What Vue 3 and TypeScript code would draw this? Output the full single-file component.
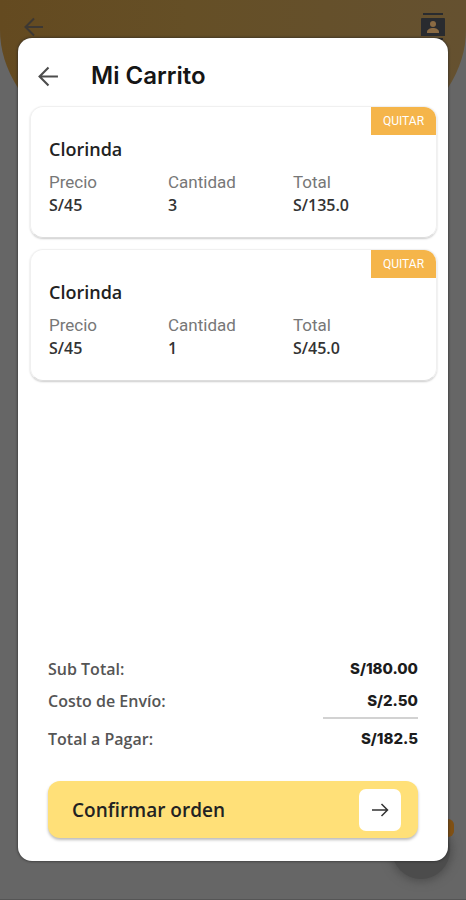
<script setup lang="ts">
import { computed, ref } from 'vue'

interface CartItem {
  id: number
  name: string
  price: number
  quantity: number
}

const items = ref<CartItem[]>([
  { id: 1, name: 'Clorinda', price: 45, quantity: 3 },
  { id: 2, name: 'Clorinda', price: 45, quantity: 1 },
])
const shipping = 2.5

const subtotal = computed(() => items.value.reduce((sum, i) => sum + i.price * i.quantity, 0))
const total = computed(() => subtotal.value + shipping)

function removeItem(id: number) {
  items.value = items.value.filter((i) => i.id !== id)
}
</script>

<template>
  <div class="screen">
    <div class="backdrop" aria-hidden="true">
      <div class="banner"></div>
      <svg class="back-behind" viewBox="0 0 20 20">
        <path d="M19 10H2M10 1.5L1.5 10l8.500 8.500" />
      </svg>
      <svg class="contacts" viewBox="0 0 24 28">
        <path class="ink" d="M2 1h20v2H2zM1 6h22a1 1 0 0 1 1 1v17H0V7a1 1 0 0 1 1-1zM2 26h20v2H2z" />
        <circle class="hole" cx="12" cy="12" r="3" />
        <path class="hole" d="M6 21v-1c0-2.500 3-4 6-4s6 1.500 6 4v1z" />
      </svg>
      <div class="fab-shadow"></div>
      <div class="fab"></div>
    </div>

    <main class="dialog" role="dialog" aria-labelledby="cart-title">
      <header class="header">
        <button class="back" type="button" aria-label="Volver">
          <svg viewBox="0 0 20 20">
            <path d="M19 10H2M10 1.500L1.500 10l8.500 8.500" />
          </svg>
        </button>
        <h1 id="cart-title">Mi Carrito</h1>
      </header>

      <section class="items">
        <article v-for="item in items" :key="item.id" class="card">
          <button class="remove" type="button" @click="removeItem(item.id)">QUITAR</button>
          <h2>{{ item.name }}</h2>
          <dl class="details">
            <div>
              <dt>Precio</dt>
              <dd>S/{{ item.price }}</dd>
            </div>
            <div>
              <dt>Cantidad</dt>
              <dd>{{ item.quantity }}</dd>
            </div>
            <div>
              <dt>Total</dt>
              <dd>S/{{ (item.price * item.quantity).toFixed(1) }}</dd>
            </div>
          </dl>
        </article>
      </section>

      <footer class="footer">
        <dl class="summary">
          <div class="line">
            <dt>Sub Total:</dt>
            <dd>S/{{ subtotal.toFixed(2) }}</dd>
          </div>
          <div class="line">
            <dt>Costo de Envío:</dt>
            <dd>S/{{ shipping.toFixed(2) }}</dd>
          </div>
          <div class="line grand">
            <dt>Total a Pagar:</dt>
            <dd>S/{{ total }}</dd>
          </div>
        </dl>
        <button class="confirm" type="button">
          <span>Confirmar orden</span>
          <span class="go">
            <svg viewBox="0 0 18 18">
              <path d="M1 9h15M10.500 3L16.500 9l-6 6" />
            </svg>
          </span>
        </button>
      </footer>
    </main>
  </div>
</template>

<style>
body {
  margin: 0;
  background: #666;
}
</style>

<style scoped>
.screen {
  position: relative;
  box-sizing: border-box;
  display: flex;
  min-height: 100vh;
  padding: 38px 18px;
  overflow: hidden;
  border-bottom: 1px solid #555;
  background: #666;
  font-family: "Open Sans", "Noto Sans", sans-serif;
}

h1,
h2,
dl,
dd {
  margin: 0;
}

button {
  border: 0;
  padding: 0;
  cursor: pointer;
}

svg {
  display: block;
  fill: none;
  stroke: #4c4c4c;
  stroke-width: 2;
}

.backdrop {
  position: absolute;
  inset: 0;
}

.banner {
  height: 180px;
  border-radius: 0 0 50% 50% / 0 0 150px 150px;
  background: linear-gradient(90deg, #644a20, #654f26 40%, #655130);
}

.back-behind {
  position: absolute;
  top: 17px;
  left: 24px;
  width: 20px;
  height: 20px;
  stroke: #3d3833;
}

.contacts {
  position: absolute;
  top: 12px;
  right: 21px;
  width: 24px;
  height: 28px;
  stroke: none;
}

.ink {
  fill: #292b2f;
}

.hole {
  fill: #8a6a43;
}

.fab-shadow {
  position: absolute;
  right: 16px;
  bottom: 20px;
  width: 58px;
  height: 58px;
  border-radius: 50%;
  background: #4c4c4c;
  box-shadow: 0 0 10px 2px #4c4c4c;
}

.fab {
  position: absolute;
  right: 12px;
  bottom: 62px;
  width: 34px;
  height: 18px;
  border-radius: 6px;
  background: #805013;
}

.dialog {
  position: relative;
  display: flex;
  flex: 1;
  flex-direction: column;
  min-width: 0;
  border-radius: 14px;
  background: #fff;
  box-shadow: 0 0 3px #222;
}

.header {
  display: flex;
  align-items: center;
  gap: 32px;
  padding: 22px 20px 14px;
}

.back {
  background: none;
}

.back svg {
  width: 21px;
  height: 21px;
}

h1 {
  color: #151515;
  font: 600 24px/32px Inter, sans-serif;
}

.items {
  display: flex;
  flex: 1;
  flex-direction: column;
  gap: 11px;
  padding: 0 11px 0 12px;
}

.card {
  position: relative;
  padding: 31px 18px 20px;
  border: 1px solid #f0f0f0;
  border-bottom-color: #ddd;
  border-radius: 13px;
  box-shadow: 0 1px 2px #ccc;
}

.remove {
  position: absolute;
  top: 0;
  right: 0;
  width: 65px;
  height: 28px;
  border-radius: 0 12px 0 0;
  background: #f5b54a;
  color: #fff;
  font: 400 12px/28px Roboto, sans-serif;
}

h2 {
  color: #222;
  font-size: 18px;
  font-weight: 600;
  line-height: 22px;
}

.details {
  display: grid;
  grid-template-columns: 119fr 125fr 125fr;
  padding-top: 11px;
}

.details dt {
  color: #777;
  font: 400 17px/23px Roboto, sans-serif;
}

.details dd {
  color: #333;
  font-size: 16px;
  font-weight: 600;
  line-height: 23px;
}

.footer {
  padding: 16px 30px 23px;
}

.line {
  display: flex;
  align-items: center;
  justify-content: space-between;
  line-height: 32px;
}

.line dt {
  color: #555;
  font-size: 16px;
  font-weight: 600;
}

.line dd {
  color: #1c1c1c;
  font-family: Inter, sans-serif;
  font-size: 15px;
  font-weight: 800;
}

.grand dd {
  min-width: 95px;
  padding-top: 4px;
  border-top: 2px solid #d2d2d2;
  text-align: right;
}

.grand dt {
  padding-top: 6px;
}

.confirm {
  display: flex;
  align-items: center;
  justify-content: space-between;
  width: 100%;
  height: 57px;
  margin-top: 26px;
  padding: 0 17px 0 24px;
  border-radius: 12px;
  background: #ffe078;
  box-shadow: 0 2px 3px #bbb;
  color: #222;
  font: 600 19px/28px "Open Sans", sans-serif;
}

.go {
  display: grid;
  place-items: center;
  width: 42px;
  height: 42px;
  border-radius: 7px;
  background: #fff;
}

.go svg {
  width: 18px;
  height: 18px;
  stroke: #333;
  stroke-width: 1.5;
}
</style>
